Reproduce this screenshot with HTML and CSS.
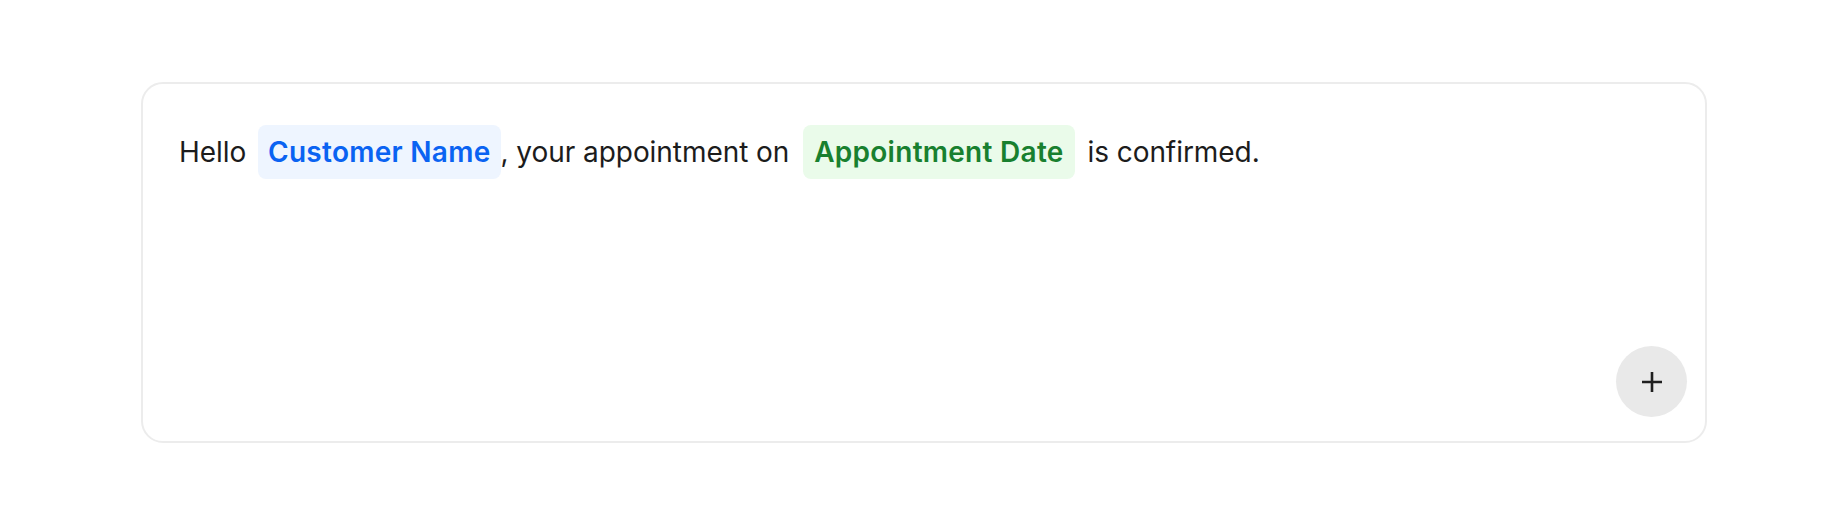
FILE: index.html
```html
<!DOCTYPE html>
<html lang="en">
<head>
<meta charset="utf-8">
<title>Template editor</title>
<link rel="stylesheet" href="styles.css">
</head>
<body>
<div class="editor">
  <p class="message">Hello <span class="chip chip-blue">Customer Name</span>, your appointment on <span class="chip chip-green">Appointment Date</span> is confirmed.</p>
  <button class="add-btn" type="button" aria-label="Add variable">
    <svg width="22" height="22" viewBox="0 0 22 22" aria-hidden="true"><path d="M11 1v20M1 11h20" stroke="#1f1f1f" stroke-width="2.6" fill="none"/></svg>
  </button>
</div>
</body>
</html>
```
FILE: styles.css
```css
html, body {
  margin: 0;
  padding: 0;
  background: #ffffff;
}
body {
  font-family: Inter, "Noto Sans", "Liberation Sans", sans-serif;
  color: #1c1c1c;
}
.editor {
  box-sizing: border-box;
  margin: 82px 141px 0;
  height: 361px;
  border: 2px solid #ececec;
  border-radius: 22px;
  padding: 41px 18px 24px 36px;
  display: flex;
  flex-direction: column;
}
.message {
  margin: 0;
  font-size: 28px;
  line-height: 54px;
  letter-spacing: -0.002em;
}
.chip {
  display: inline-block;
  height: 54px;
  line-height: 54px;
  padding: 0 10px;
  border-radius: 8px;
  font-weight: 600;
  letter-spacing: 0.01em;
  vertical-align: top;
}
.chip-blue {
  background: #eef5ff;
  color: #0a63f2;
  margin-left: 4px;
}
.chip-green {
  background: #eafbea;
  color: #18802f;
  margin: 0 5px 0 6px;
  padding: 0 11px;
}
.add-btn {
  margin-top: auto;
  align-self: flex-end;
  width: 71px;
  height: 71px;
  border-radius: 50%;
  border: none;
  background: #e9e9e9;
  display: flex;
  align-items: center;
  justify-content: center;
  padding: 0;
  cursor: pointer;
}
```
